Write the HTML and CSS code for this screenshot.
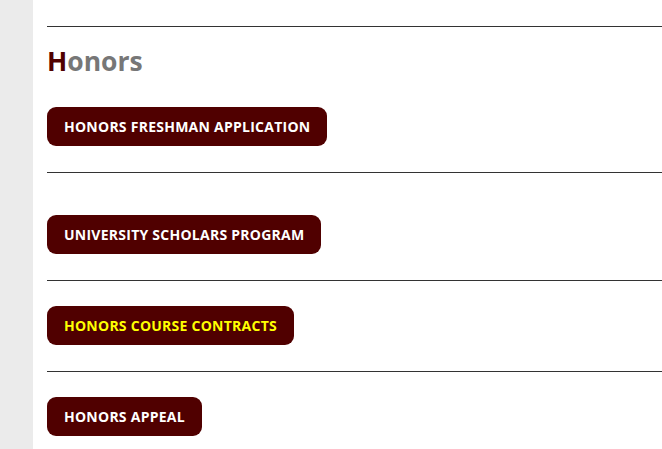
FILE: index.html
```html
<!DOCTYPE html>
<html>
<head>
<meta charset="utf-8">
<link rel="stylesheet" href="styles.css">
</head>
<body>
<div class="page">
  <aside class="strip"></aside>
  <main class="content">
    <div class="rule first"></div>
    <h2 class="title"><span class="initial">H</span>onors</h2>
    <div class="row"><a class="btn">HONORS FRESHMAN APPLICATION</a></div>
    <div class="rule"></div>
    <div class="row spaced"><a class="btn">UNIVERSITY SCHOLARS PROGRAM</a></div>
    <div class="rule"></div>
    <div class="row after"><a class="btn hot">HONORS COURSE CONTRACTS</a></div>
    <div class="rule"></div>
    <div class="row after"><a class="btn">HONORS APPEAL</a></div>
  </main>
</div>
</body>
</html>
```

FILE: styles.css
```css
html, body {
  margin: 0;
  padding: 0;
  background: #ffffff;
  font-family: "Open Sans", "Liberation Sans", sans-serif;
}
.page {
  display: flex;
  min-height: 449px;
  overflow: hidden;
}
.strip {
  width: 33px;
  flex: 0 0 33px;
  background: #ebebeb;
}
.content {
  flex: 1;
  padding-left: 14px;
  display: flex;
  flex-direction: column;
}
.rule {
  height: 1px;
  background: #333333;
}
.rule.first {
  margin-top: 26px;
}
.title {
  margin: 16px 0 0 0;
  height: 64px;
  font-size: 26.5px;
  line-height: 36px;
  font-weight: 700;
  color: #777777;
}
.initial {
  color: #500000;
}
.row {
  padding: 0 0 26px 0;
}
.row.after {
  padding-top: 25px;
}
.row.spaced {
  padding-top: 42px;
}
.btn {
  display: inline-block;
  height: 39px;
  line-height: 39px;
  padding: 0 17px 0 17px;
  background: #500000;
  color: #ffffff;
  font-size: 14px;
  letter-spacing: 0.25px;
  font-weight: 700;
  border-radius: 9px;
  text-decoration: none;
}
.btn.hot {
  color: #ffff00;
}
```
